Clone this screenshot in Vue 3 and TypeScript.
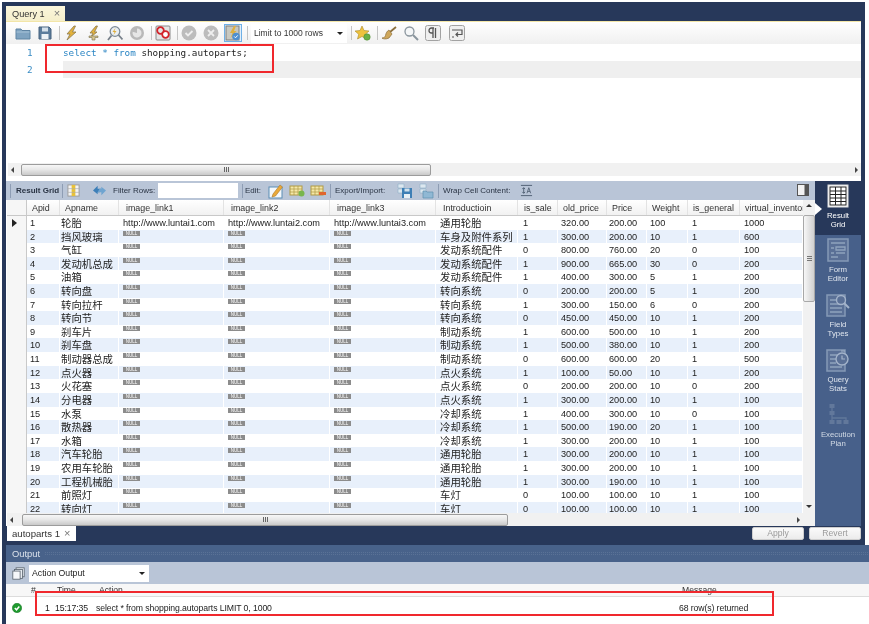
<script setup lang="ts">
const headers: string[] = ['Apid', 'Apname', 'image_link1', 'image_link2', 'image_link3', 'Introductioin', 'is_sale', 'old_price', 'Price', 'Weight', 'is_general', 'virtual_inventory']
const colClass: string[] = ['c-id', 'c-name', 'c-link', 'c-link', 'c-link', 'c-intro', 'c-sale', 'c-old', 'c-price', 'c-weight', 'c-gen', 'c-virt']

type Row = [string, string, string, string, string, string, string, string]
const raw: Row[] = [
  ['轮胎', '通用轮胎', '1', '320.00', '200.00', '100', '1', '1000'],
  ['挡风玻璃', '车身及附件系列', '1', '300.00', '200.00', '10', '1', '600'],
  ['气缸', '发动系统配件', '0', '800.00', '760.00', '20', '0', '100'],
  ['发动机总成', '发动系统配件', '1', '900.00', '665.00', '30', '0', '200'],
  ['油箱', '发动系统配件', '1', '400.00', '300.00', '5', '1', '200'],
  ['转向盘', '转向系统', '0', '200.00', '200.00', '5', '1', '200'],
  ['转向拉杆', '转向系统', '1', '300.00', '150.00', '6', '0', '200'],
  ['转向节', '转向系统', '0', '450.00', '450.00', '10', '1', '200'],
  ['刹车片', '制动系统', '1', '600.00', '500.00', '10', '1', '200'],
  ['刹车盘', '制动系统', '1', '500.00', '380.00', '10', '1', '200'],
  ['制动器总成', '制动系统', '0', '600.00', '600.00', '20', '1', '500'],
  ['点火器', '点火系统', '1', '100.00', '50.00', '10', '1', '200'],
  ['火花塞', '点火系统', '0', '200.00', '200.00', '10', '0', '200'],
  ['分电器', '点火系统', '1', '300.00', '200.00', '10', '1', '100'],
  ['水泵', '冷却系统', '1', '400.00', '300.00', '10', '0', '100'],
  ['散热器', '冷却系统', '1', '500.00', '190.00', '20', '1', '100'],
  ['水箱', '冷却系统', '1', '300.00', '200.00', '10', '1', '100'],
  ['汽车轮胎', '通用轮胎', '1', '300.00', '200.00', '10', '1', '100'],
  ['农用车轮胎', '通用轮胎', '1', '300.00', '200.00', '10', '1', '100'],
  ['工程机械胎', '通用轮胎', '1', '300.00', '190.00', '10', '1', '100'],
  ['前照灯', '车灯', '0', '100.00', '100.00', '10', '1', '100'],
  ['转向灯', '车灯', '0', '100.00', '100.00', '10', '1', '100'],
]
const rows = raw.map((r, i) => ({ id: i + 1, name: r[0], intro: r[1], rest: r.slice(2) }))
const restClass = ['c-sale', 'c-old', 'c-price', 'c-weight', 'c-gen', 'c-virt']
const links = [1, 2, 3]
</script>

<template>
  <div class="root">
    <div class="upper">
      <div class="tabbar">
        <div class="tab">Query 1<span class="tab-x">×</span></div>
      </div>
      <div class="toolbar">
        <svg class="ic" viewBox="0 0 16 16"><path d="M1 4h5l1 1.5h8V14H1z" fill="#7fa3c0" stroke="#5f84a3"/><path d="M1.5 7h13" stroke="#a9c4d8"/></svg>
        <svg class="ic" viewBox="0 0 16 16"><path d="M2 2h10l2 2v10H2z" fill="#5b7c9c" stroke="#46627f"/><rect x="5" y="2.5" width="6" height="4" fill="#d5e0ea"/><rect x="4.5" y="9" width="7" height="5" fill="#eef2f6"/></svg>
        <i class="sep"></i>
        <svg class="ic" viewBox="0 0 16 16"><path d="M11 1 4 9h3l-3 6 9-8H9.500l3-6z" fill="#e3b23c" stroke="#8a7a50" stroke-width=".8"/></svg>
        <svg class="ic" viewBox="0 0 16 16"><path d="M11 1 5 8h3l-2 4 6-5H9.500l3-6z" fill="#e3b23c" stroke="#8a7a50" stroke-width=".8"/><path d="M4 11h9v1.500H10V15H7v-2.500H4z" fill="#d9c68f" stroke="#77704f" stroke-width=".6"/></svg>
        <svg class="ic" viewBox="0 0 16 16"><circle cx="8" cy="6.500" r="4.800" fill="#e9eef2" stroke="#7d8a96" stroke-width="1.300"/><path d="m8.500 3-3 4h2l-1 3 3-4h-2z" fill="#dfae3a"/><path d="m11.500 10 4 4.500M4.500 10.500l-3.500 4.500" stroke="#77808a" stroke-width="1.800"/></svg>
        <svg class="ic" viewBox="0 0 16 16"><circle cx="8" cy="8" r="7" fill="#b9b9b9"/><path d="M8 3.500a4.500 4.500 0 1 1-4.300 3.200L8 8z" fill="#e6e6e6"/></svg>
        <i class="sep"></i>
        <svg class="ic" viewBox="0 0 16 16"><rect x="1" y="1" width="14" height="14" rx="1" fill="#e4e4e4" stroke="#8a8a8a"/><circle cx="5.500" cy="5.500" r="3.300" fill="none" stroke="#d2232a" stroke-width="1.800"/><circle cx="10.500" cy="9.500" r="3.300" fill="#fff" stroke="#d2232a" stroke-width="1.800"/></svg>
        <i class="sep"></i>
        <svg class="ic" viewBox="0 0 16 16"><circle cx="8" cy="8" r="7.500" fill="#bcbcbc"/><path d="m4.500 8 2.500 2.500 4.500-4.500" fill="none" stroke="#eee" stroke-width="1.800"/></svg>
        <svg class="ic" viewBox="0 0 16 16"><circle cx="8" cy="8" r="7.500" fill="#bcbcbc"/><path d="m5 5 6 6m0-6-6 6" stroke="#eee" stroke-width="1.800"/></svg>
        <div class="toggle">
          <svg class="ic" viewBox="0 0 16 16"><rect x="1" y="1" width="13" height="14" fill="#c8c8c0" stroke="#7f7f7f"/><path d="m9 1-4 7h2.500l-2 5 6-7H9l2-5z" fill="#e0b040"/><circle cx="11" cy="11.500" r="3.800" fill="#4f8fd0"/><path d="m9.300 11.500 1.200 1.300 2.200-2.400" stroke="#fff" fill="none"/></svg>
        </div>
        <i class="sep sep-before-select"></i>
        <div class="limit"><span>Limit to 1000 rows</span><b class="caret"></b></div>
        <i class="sep sep-after-select"></i>
        <svg class="ic" viewBox="0 0 16 16"><path d="m7 1 2 4.500 5 .5-3.700 3.300L11.500 14 7 11.500 2.500 14l1.200-4.700L0 6l5-.5z" fill="#eec23e" stroke="#a98a2a" stroke-width=".6"/><circle cx="12" cy="12" r="3.200" fill="#69b045" stroke="#4d8c30" stroke-width=".6"/></svg>
        <i class="sep"></i>
        <svg class="ic" viewBox="0 0 16 16"><path d="m15 2-6 5" stroke="#8b6f3c" stroke-width="1.800"/><path d="M8 5 11 9 8 13c-3 1.500-6 1-7 0 2 0 3-1 3.500-2.500C5 8 6 6 8 5z" fill="#cfa75b" stroke="#8b6f3c" stroke-width=".7"/></svg>
        <svg class="ic" viewBox="0 0 16 16"><circle cx="6.500" cy="6.500" r="4.500" fill="#f5f7f8" stroke="#8a959d" stroke-width="1.300"/><path d="m10 10 5 5" stroke="#8a959d" stroke-width="2"/></svg>
        <svg class="ic" viewBox="0 0 16 16"><rect x=".5" y=".5" width="15" height="15" rx="2" fill="#efefef" stroke="#a2a2a2"/><path d="M9 3H6.500a2.500 2.500 0 0 0 0 5H8m0-5v10M10.500 3v10" fill="none" stroke="#555" stroke-width="1.300"/></svg>
        <svg class="ic ic-wrap" viewBox="0 0 16 16"><rect x=".5" y=".5" width="15" height="15" rx="2" fill="#efefef" stroke="#a2a2a2"/><path d="M3 5h10v4.500H7M9 7.500 7 9.500l2 2M3 12h2" fill="none" stroke="#555" stroke-width="1.200"/></svg>
      </div>
      <div class="editor">
        <div class="line">
          <span class="ln">1</span><code class="sql"><span class="kw">select</span> <span class="kw">*</span> <span class="kw">from</span> shopping.autoparts;</code>
        </div>
        <div class="line line-cur"><span class="ln">2</span></div>
      </div>
      <div class="hscroll h-top">
        <b class="arr-l"></b>
        <div class="thumb t-top"><span class="grip"><i></i><i></i><i></i></span></div>
        <b class="arr-r"></b>
      </div>
      <div class="spacer"></div>

      <div class="result">
        <div class="result-main">
          <div class="rtools">
            <i class="rsep first"></i>
            <span class="bold t-rg">Result Grid</span>
            <i class="rsep"></i>
            <svg class="ic-s" viewBox="0 0 14 14"><rect x="1" y="1" width="12" height="12" fill="#f4f4f4" stroke="#999"/><rect x="5" y="1" width="4" height="12" fill="#e8c23a"/><path d="M1 5h12M1 9h12" stroke="#aaa" stroke-width=".7"/></svg>
            <svg class="ic-r" viewBox="0 0 16 14"><path d="M1 7 6 2v3h4L8 9H6v2z" fill="#3d7fb8"/><path d="m15 7-5 5V9H6l2-4h2V3z" fill="#6fa4d0"/></svg>
            <span class="t-small t-filter">Filter Rows:</span>
            <div class="filter"></div>
            <i class="rsep"></i>
            <span class="t-small t-edit">Edit:</span>
            <svg class="ic" viewBox="0 0 16 16"><rect x="1" y="4" width="13" height="11" fill="#f4f8fb" stroke="#5b8db5"/><path d="m5 11 7-9 2.500 2-7 9L4 14z" fill="#e9a93a" stroke="#a9772a" stroke-width=".6"/></svg>
            <svg class="ic" viewBox="0 0 16 16"><rect x="1" y="3" width="12" height="9" fill="#f5e8a8" stroke="#b09a45"/><path d="M1 6h12M1 9h12M5 3v9M9 3v9" stroke="#b09a45" stroke-width=".7"/><circle cx="12.500" cy="10.500" r="3" fill="#78b64e"/></svg>
            <svg class="ic" viewBox="0 0 16 16"><rect x="1" y="3" width="12" height="9" fill="#f5e8a8" stroke="#b09a45"/><path d="M1 6h12M1 9h12M5 3v9M9 3v9" stroke="#b09a45" stroke-width=".7"/><rect x="9" y="9" width="7" height="3" fill="#e0652e"/></svg>
            <i class="rsep"></i>
            <span class="t-small t-exp">Export/Import:</span>
            <svg class="ic" viewBox="0 0 16 16"><path d="M1 1h6v4H1zM1 6h6v4H1z" fill="#dce7ef" stroke="#8fb0c8" stroke-width=".6"/><rect x="5" y="5" width="10" height="10" fill="#3e7fb5"/><rect x="7" y="11" width="6" height="4" fill="#e8f0f6"/><rect x="7.500" y="5.500" width="5" height="3" fill="#cfe0ec"/></svg>
            <svg class="ic" viewBox="0 0 16 16"><path d="M2 1h6v4H2zM2 6h6v4H2z" fill="#dce7ef" stroke="#8fb0c8" stroke-width=".6"/><path d="M5 8h3l1 1h6v6H5z" fill="#90b8d4" stroke="#5f8fb0" stroke-width=".7"/></svg>
            <i class="rsep"></i>
            <span class="t-small t-wrap">Wrap Cell Content:</span>
            <svg class="ic-s wrapic" viewBox="0 0 14 14"><path d="M1 1.500h12M1 12.500h12M4 4v6M2.500 5.500 4 4l1.500 1.500M2.500 8.500 4 10l1.500-1.500" fill="none" stroke="#4d5d70"/><path d="m7.500 10 2-6 2 6M8.300 8h2.500" fill="none" stroke="#4d5d70" stroke-width=".9"/></svg>
            <svg class="panel-ic" viewBox="0 0 12 12"><rect x=".5" y=".5" width="11" height="11" fill="#f2f2f2" stroke="#555"/><rect x="7.500" y="1" width="4" height="10" fill="#555"/></svg>
          </div>
          <div class="grid-wrap">
            <div class="table">
              <div class="thead">
                <span class="gutter"></span>
                <span v-for="(h, i) in headers" :key="h" class="th" :class="colClass[i]">{{ h }}</span>
              </div>
              <div class="tbody">
                <div v-for="(r, i) in rows" :key="r.id" class="tr" :class="{ alt: i % 2 === 1 }">
                  <span class="gutter"><b v-if="i === 0" class="marker"></b></span>
                  <span class="td c-id">{{ r.id }}</span>
                  <span class="td c-name cjk">{{ r.name }}</span>
                  <template v-for="n in links" :key="n">
                    <span v-if="i === 0" class="td c-link">http://www.luntai{{ n }}.com</span>
                    <span v-else class="td c-link"><em class="null">NULL</em></span>
                  </template>
                  <span class="td c-intro cjk">{{ r.intro }}</span>
                  <span v-for="(v, k) in r.rest" :key="k" class="td" :class="restClass[k]">{{ v }}</span>
                </div>
              </div>
              <div class="hscroll h-low">
                <b class="arr-l"></b>
                <div class="thumb t-low"><span class="grip"><i></i><i></i><i></i></span></div>
                <b class="arr-r"></b>
              </div>
            </div>
            <div class="vscroll">
              <b class="arr-u"></b>
              <div class="vthumb"><span class="vgrip"><i></i><i></i><i></i></span></div>
              <b class="arr-d"></b>
            </div>
          </div>
        </div>
        <aside class="side">
          <div class="side-item active">
            <svg class="side-ic" viewBox="0 0 22 24"><rect x="1" y="1" width="20" height="22" fill="#fff" stroke="#ddd"/><rect x="3" y="3" width="16" height="18" fill="#fff" stroke="#222"/><path d="M3 7h16M3 10.500h16M3 14h16M3 17.500h16M8.500 3v18M14 3v18" stroke="#222"/></svg>
            <span>Result<br />Grid</span>
            <b class="pointer"></b>
          </div>
          <div class="side-item">
            <svg class="side-ic" viewBox="0 0 22 24"><rect x="1" y="1" width="20" height="22" fill="#5a7096" stroke="#8599b6" stroke-width="1.500"/><path d="M4 5h14M9 9h9v3H9zM4 10h3M4 15h3M9 15h9M4 19h7" stroke="#8fa2bd" fill="none" stroke-width="1.300"/></svg>
            <span>Form<br />Editor</span>
          </div>
          <div class="side-item">
            <svg class="side-ic" viewBox="0 0 24 24"><rect x="1" y="2" width="18" height="21" fill="#5a7096" stroke="#8599b6" stroke-width="1.500"/><path d="M4 7h8M4 11h9M4 15h12M4 19h12" stroke="#8fa2bd" stroke-width="1.500"/><circle cx="15" cy="7" r="4.500" fill="#5a7096" stroke="#a3b3ca" stroke-width="1.400"/><path d="m18 10 5 5" stroke="#a3b3ca" stroke-width="2"/></svg>
            <span>Field<br />Types</span>
          </div>
          <div class="side-item">
            <svg class="side-ic" viewBox="0 0 24 24"><rect x="1" y="2" width="18" height="21" fill="#5a7096" stroke="#8599b6" stroke-width="1.500"/><path d="M4 7h7M4 11h6M4 15h6M4 19h12" stroke="#8fa2bd" stroke-width="1.500"/><circle cx="16" cy="11" r="6" fill="#5a7096" stroke="#a3b3ca" stroke-width="1.400"/><path d="M16 7.500V11h3M15 3h4" stroke="#a3b3ca" stroke-width="1.200" fill="none"/></svg>
            <span>Query<br />Stats</span>
          </div>
          <div class="side-item dim">
            <svg class="side-ic" viewBox="0 0 24 24"><path d="M6 3v15M6 15h14v3" fill="none" stroke="#62789b" stroke-width="1.300"/><rect x="3.500" y="1" width="5" height="4" fill="#62789b"/><rect x="3.500" y="8" width="5" height="4" fill="#62789b"/><rect x="3.500" y="17" width="5" height="4" fill="#62789b"/><rect x="10.500" y="17" width="5" height="4" fill="#62789b"/><rect x="17.500" y="17" width="5" height="4" fill="#62789b"/></svg>
            <span>Execution<br />Plan</span>
          </div>
        </aside>
      </div>

      <div class="rtabbar">
        <div class="rtab">autoparts 1<span class="tab-x">×</span></div>
        <div class="btns">
          <span class="btn">Apply</span>
          <span class="btn">Revert</span>
        </div>
      </div>
    </div>

    <div class="output">
      <div class="out-head"><span>Output</span><i class="dots"></i></div>
      <div class="out-tools">
        <svg class="ic-o" viewBox="0 0 16 16"><rect x="5" y="1" width="10" height="11" fill="#e8edf2" stroke="#59636e"/><rect x="3" y="3" width="10" height="11" fill="#e8edf2" stroke="#59636e"/><rect x="1" y="5" width="9" height="10" fill="#f6f8fa" stroke="#59636e"/></svg>
        <div class="combo"><span>Action Output</span><b class="caret"></b></div>
      </div>
      <div class="out-th">
        <span class="o-ic"></span>
        <span class="o-n">#</span>
        <span class="o-time">Time</span>
        <span class="o-act">Action</span>
        <span class="o-msg">Message</span>
      </div>
      <div class="out-row">
        <span class="o-ic">
          <svg class="ok" viewBox="0 0 10 10"><circle cx="5" cy="5" r="4.700" fill="#1f9a2e" stroke="#0f6e1c" stroke-width=".5"/><path d="m2.800 5 1.700 1.800L7.300 3.600" fill="none" stroke="#fff" stroke-width="1.500"/></svg>
        </span>
        <span class="o-n num">1</span>
        <span class="o-time">15:17:35</span>
        <span class="o-act">select * from shopping.autoparts LIMIT 0, 1000</span>
        <span class="o-msg">68 row(s) returned</span>
      </div>
    </div>

    <div class="mark mark-a"></div>
    <div class="mark mark-b"></div>
  </div>
</template>

<style>
html, body { margin: 0; background: #fff; }
</style>

<style scoped>
.root {
  position: relative;
  width: 869px;
  height: 624px;
  box-sizing: border-box;
  padding: 2px 0 0 2px;
  background: #fff;
  overflow: hidden;
  font-family: "Liberation Sans", "Noto Sans CJK SC", sans-serif;
  font-size: 9.2px;
  color: #222;
  filter: blur(0.4px);
}
.upper {
  width: 863px;
  box-sizing: border-box;
  padding: 0 4px;
  background: #27385a;
}
.tabbar { height: 19px; padding-top: 4px; box-sizing: border-box; }
.tab {
  width: 59px;
  height: 15px;
  background: linear-gradient(#fbf6dc, #f5efcb);
  font-size: 9.2px;
  line-height: 15px;
  padding-left: 6px;
  box-sizing: border-box;
  color: #333;
}
.tab-x { margin-left: 9px; color: #777; font-size: 11px; }
.toolbar {
  height: 23px;
  box-sizing: border-box;
  border-top: 1px solid #f3e6a8;
  background: linear-gradient(#fff, #f0f0f0);
  display: flex;
  align-items: center;
  gap: 6px;
  padding-left: 9px;
}
.ic { width: 16px; height: 16px; flex: none; }
.ic-wrap { margin-left: 2px; }
.sep { width: 1px; height: 14px; background: #c4c4c4; margin-right: -3px; flex: none; }
.sep-before-select { margin-left: -1px; }
.sep-after-select { margin-left: -2px; }
.toggle {
  width: 18px;
  height: 18px;
  margin-left: -1px;
  box-sizing: border-box;
  border: 1px solid #6fb0e6;
  background: #e1eef9;
  flex: none;
}
.toggle .ic { display: block; width: 16px; height: 16px; }
.limit {
  width: 96px;
  height: 19px;
  flex: none;
  background: #fff;
  display: flex;
  align-items: center;
  justify-content: space-between;
  padding: 0 4px 0 3px;
  box-sizing: border-box;
  font-size: 8.5px;
  color: #333;
}
.caret {
  width: 0;
  height: 0;
  border-left: 3px solid transparent;
  border-right: 3px solid transparent;
  border-top: 3px solid #222;
}
.editor { height: 119px; background: #fff; }
.line { height: 17px; display: flex; align-items: center; }
.line-cur { background: linear-gradient(90deg, #fff 57px, #efefef 57px); }
.ln { width: 57px; padding-left: 21px; box-sizing: border-box; color: #3a8cc4; font-family: "DejaVu Sans Mono", monospace; font-size: 9.3px; }
.sql { font-family: "DejaVu Sans Mono", monospace; font-size: 9.3px; color: #222; white-space: pre; }
.kw { color: #2c86c4; }
.hscroll {
  height: 13px;
  background: #f1f1f1;
  display: flex;
  align-items: center;
  position: relative;
}
.h-top { border-left: 2px solid #fff; }
.arr-l {
  width: 0; height: 0; margin-left: 3px;
  border-top: 3px solid transparent;
  border-bottom: 3px solid transparent;
  border-right: 3px solid #444;
}
.arr-r {
  width: 0; height: 0; margin-left: auto; margin-right: 3px;
  border-top: 3px solid transparent;
  border-bottom: 3px solid transparent;
  border-left: 3px solid #444;
}
.arr-u, .arr-d {
  display: block; width: 0; height: 0; margin: 0 auto;
  border-left: 3px solid transparent;
  border-right: 3px solid transparent;
}
.arr-u { border-bottom: 3px solid #333; margin-top: 4px; margin-bottom: 8px; }
.arr-d { border-top: 3px solid #333; margin-top: 203px; }
.thumb {
  height: 12px;
  box-sizing: border-box;
  border: 1px solid #9c9c9c;
  border-radius: 2px;
  background: linear-gradient(#f7f7f7, #e8e8e8 45%, #c9c9c9);
  display: flex;
  align-items: center;
  justify-content: center;
}
.t-top { width: 410px; margin-left: 7px; }
.t-low { width: 486px; margin-left: 9px; }
.grip { display: flex; gap: 1px; }
.grip i { width: 1px; height: 5px; background: #666; }
.spacer { height: 5px; background: #fff; }

.result { display: flex; height: 345px; }
.result-main { width: 809px; box-sizing: border-box; padding-left: 1px; background: #fff; flex: none; }
.rtools {
  height: 19px;
  margin-left: -1px;
  background: #b9c5d7;
  display: flex;
  align-items: center;
  gap: 4px;
  padding-left: 4px;
  position: relative;
}
.rsep { width: 1px; height: 14px; background: #8e9db4; flex: none; }
.t-small, .bold { font-size: 8px; white-space: nowrap; color: #2a3444; flex: none; }
.bold { font-weight: bold; }
.t-rg { width: 45px; margin-right: -3px; margin-left: 1px; }
.ic-s { width: 13px; height: 13px; flex: none; }
.ic-r { width: 15px; height: 13px; flex: none; margin-left: 8px; }
.t-filter { width: 41px; margin-left: 2px; }
.filter { width: 80px; height: 15px; background: #fff; flex: none; }
.t-edit { width: 18px; margin-left: -2px; }
.rtools .ic { margin-left: 1px; }
.t-exp { width: 57px; }
.t-wrap { width: 70px; }
.wrapic { margin-left: 3px; }
.panel-ic { width: 12px; height: 12px; position: absolute; left: 791px; top: 3px; }

.grid-wrap { display: flex; height: 326px; }
.table { width: 796px; flex: none; }
.thead, .tr {
  display: grid;
  grid-template-columns: 20px 33px 59px 105px 106px 106px 82px 40px 49px 40px 41px 52px 63px;
}
.thead {
  height: 16px;
  background: linear-gradient(#fff, #f1f1f1);
  border-bottom: 1px solid #c8c8c8;
  box-sizing: border-box;
  line-height: 17px;
  overflow: hidden;
}
.gutter { border-right: 1px solid #c9c9c9; background: #f6f6f6; position: relative; display: block; }
.th {
  border-right: 1px solid #e3e3e3;
  white-space: nowrap;
  overflow: hidden;
  color: #333;
  font-size: 8.9px;
}
.th.c-id { padding-left: 5px; }
.th.c-name { padding-left: 5px; }
.th.c-link { padding-left: 7px; }
.th.c-intro { padding-left: 7px; }
.th.c-sale { padding-left: 6px; }
.th.c-old { padding-left: 5px; }
.th.c-price { padding-left: 5px; }
.th.c-weight { padding-left: 5px; }
.th.c-gen { padding-left: 5px; }
.th.c-virt { padding-left: 5px; border-right: 0; }
.tbody { height: 297px; overflow: hidden; }
.tr { height: 13.62px; line-height: 15.6px; }
.td {
  border-right: 1px solid #fff;
  overflow: hidden;
  white-space: nowrap;
  font-size: 9.2px;
  color: #222;
}
.tr.alt .td { background: #e8f0fb; }
.cjk { font-size: 10.4px; line-height: 14.2px; font-family: "Noto Sans CJK SC", sans-serif; }
.c-id { padding-left: 3px; }
.c-name { padding-left: 1px; }
.c-link { padding-left: 4px; }
.c-intro { padding-left: 4px; }
.c-sale { padding-left: 5px; }
.c-old { padding-left: 3px; }
.c-price { padding-left: 2px; }
.c-weight { padding-left: 3px; }
.c-gen { padding-left: 4px; }
.c-virt { padding-left: 4px; }
.null {
  display: block;
  width: 17px;
  height: 5px;
  margin-top: 1px;
  background: #8c8c8c;
  color: #fff;
  font-style: normal;
  font-size: 4.5px;
  line-height: 5px;
  text-align: center;
}
.marker {
  position: absolute;
  left: 5px;
  top: 3px;
  width: 0;
  height: 0;
  border-top: 4px solid transparent;
  border-bottom: 4px solid transparent;
  border-left: 5px solid #222;
}
.vscroll { width: 12px; background: #f1f1f1; flex: none; }
.vthumb {
  height: 87px;
  box-sizing: border-box;
  border: 1px solid #a8a8a8;
  border-radius: 2px;
  background: linear-gradient(90deg, #f7f7f7, #d0d0d0);
  display: flex;
  align-items: center;
  justify-content: center;
}
.vgrip { display: flex; flex-direction: column; gap: 1px; }
.vgrip i { width: 5px; height: 1px; background: #777; }

.side { width: 46px; flex: none; background: #47608a; }
.side-item {
  height: 55px;
  position: relative;
  display: flex;
  flex-direction: column;
  align-items: center;
  padding-top: 3px;
  box-sizing: border-box;
  color: #dfe5ee;
  font-size: 7.8px;
  line-height: 8.7px;
  text-align: center;
}
.side-item.active { height: 54px; background: #27385a; color: #fff; }
.side-item.dim { color: #d3dbe6; }
.side-ic { width: 24px; height: 24px; margin-bottom: 4px; }
.pointer {
  position: absolute;
  left: 0;
  top: 22px;
  width: 0;
  height: 0;
  border-top: 6px solid transparent;
  border-bottom: 6px solid transparent;
  border-left: 7px solid #fff;
}

.rtabbar { height: 19px; display: flex; }
.rtab {
  width: 69px;
  height: 15px;
  margin-left: 1px;
  background: #fff;
  font-size: 9.6px;
  line-height: 15px;
  padding-left: 5px;
  box-sizing: border-box;
  color: #333;
}
.rtab .tab-x { margin-left: 4px; }
.btns { margin-left: auto; display: flex; gap: 5px; padding-top: 1px; }
.btn {
  width: 52px;
  height: 13px;
  box-sizing: border-box;
  border-radius: 2px;
  background: linear-gradient(#fafafa, #ececec);
  border: 1px solid #cfcfcf;
  color: #9a9a9a;
  font-size: 8.6px;
  line-height: 11px;
  text-align: center;
}

.output {
  border-left: 4px solid #27385a;
  height: 79px;
  background: #fff;
  width: 867px;
  box-sizing: border-box;
}
.out-head {
  height: 17px;
  background: #48628a;
  color: #dbe2ec;
  font-size: 9.4px;
  line-height: 17px;
  padding-left: 6px;
  display: flex;
  align-items: center;
  gap: 5px;
}
.dots {
  flex: 1;
  height: 5px;
  background-image: linear-gradient(45deg, #5a7296 25%, transparent 25%, transparent 75%, #5a7296 75%);
  background-size: 2px 2px;
}
.out-tools {
  height: 22px;
  background: #b9c5d7;
  display: flex;
  align-items: center;
  padding-left: 6px;
  gap: 4px;
}
.ic-o { width: 13px; height: 13px; flex: none; }
.combo {
  width: 120px;
  height: 17px;
  background: #fff;
  display: flex;
  align-items: center;
  justify-content: space-between;
  padding: 0 4px 0 3px;
  box-sizing: border-box;
  font-size: 8.7px;
  color: #222;
}
.out-th, .out-row { display: flex; align-items: center; white-space: nowrap; }
.out-th {
  height: 13px;
  background: #f7f7f7;
  border-bottom: 1px solid #dcdcdc;
  box-sizing: border-box;
  font-size: 8.6px;
  color: #333;
}
.out-row { height: 22px; font-size: 8.7px; letter-spacing: -0.1px; color: #222; }
.o-ic { width: 19px; flex: none; display: flex; padding-left: 6px; box-sizing: border-box; }
.o-n { width: 30px; flex: none; padding-left: 6px; box-sizing: border-box; }
.o-n.num { padding-left: 20px; }
.o-time { width: 41px; flex: none; }
.o-act { width: 583px; flex: none; }
.o-msg { flex: none; }
.out-th .o-time { padding-left: 2px; box-sizing: border-box; }
.out-th .o-act { padding-left: 3px; box-sizing: border-box; }
.out-th .o-msg { padding-left: 3px; }
.ok { width: 10px; height: 10px; }

.mark { position: absolute; border: 2px solid #f0282d; box-sizing: border-box; pointer-events: none; }
.mark-a { left: 45px; top: 44px; width: 229px; height: 29px; }
.mark-b { left: 35px; top: 591px; width: 739px; height: 25px; }
</style>
